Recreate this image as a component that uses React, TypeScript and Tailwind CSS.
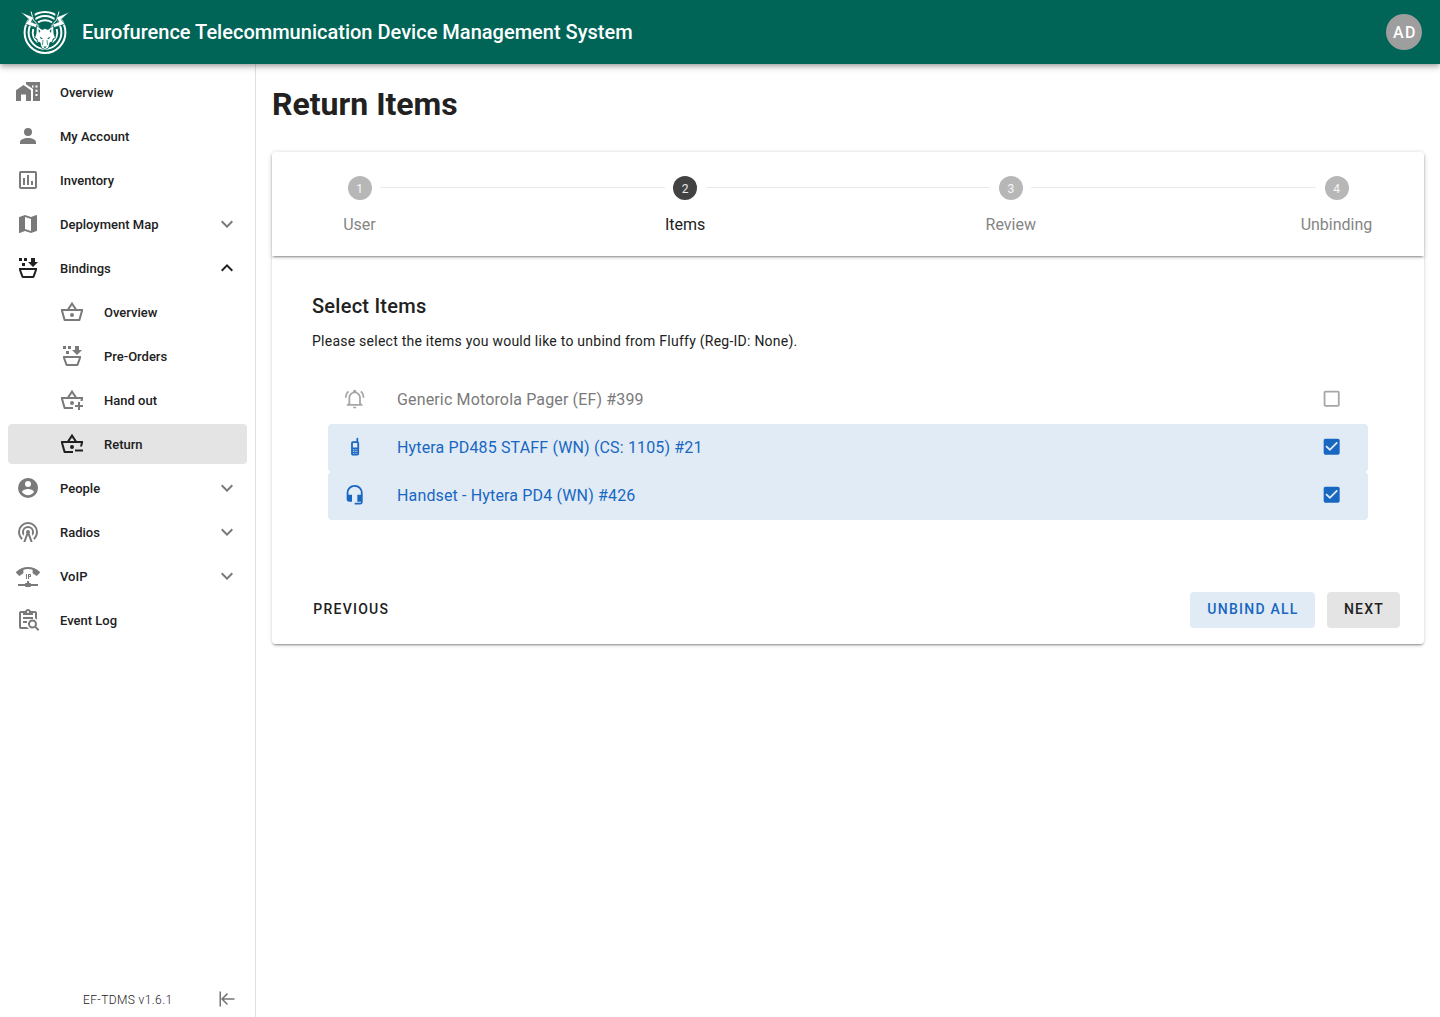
import React from "react";

const icons = {
  account:
    "M12,4A4,4 0 0,1 16,8A4,4 0 0,1 12,12A4,4 0 0,1 8,8A4,4 0 0,1 12,4M12,14C16.42,14 20,15.79 20,18V20H4V18C4,15.79 7.58,14 12,14Z",
  homeCity:
    "M7.5 5L0 10.2V21H5V14.5H10V21H15V10.2L7.5 5M10 2V4.2L17 9V21H24V2H10M16 5.500H17.500V7.500H16V5.500M19.500 5.500H21.500V7.500H19.500V5.500M19.500 9.800H21.500V11.800H19.500V9.800M19.500 14H21.500V16H19.500V14Z",
  chart:
    "M9 17H7V10H9V17M13 17H11V7H13V17M17 17H15V13H17V17M19 19H5V5H19V19.1M19 3H5C3.9 3 3 3.9 3 5V19C3 20.1 3.9 21 5 21H19C20.1 21 21 20.1 21 19V5C21 3.9 20.1 3 19 3Z",
  map: "M15,19L9,16.89V5L15,7.11M20.5,3C20.44,3 20.39,3 20.34,3L15,5.1L9,3L3.36,4.9C3.15,4.97 3,5.15 3,5.38V20.5A0.5,0.5 0 0,0 3.5,21C3.55,21 3.61,21 3.66,20.97L9,18.9L15,21L20.64,19.1C20.85,19 21,18.85 21,18.62V3.5A0.5,0.5 0 0,0 20.5,3Z",
  down: "M7.41,8.58L12,13.17L16.59,8.58L18,10L12,16L6,10L7.41,8.58Z",
  up: "M7.41,15.41L12,10.83L16.59,15.41L18,14L12,8L6,14L7.41,15.41Z",
  basketFill:
    "M3 2H6V5H3V2M6 7H9V10H6V7M8 2H11V5H8V2M17 11L12 6H15V2H19V6H22L17 11M3 12H21V14L18.5 21C18.3 21.6 17.8 22 17 22H7C6.2 22 5.7 21.6 5.5 21L3 14V12M5.1 14L7.3 20H16.7L18.9 14H5.1Z",
  basket:
    "M1 9H7.2L12 1.8L16.8 9H23V11L20.3 20.6L19.8 21H4.2L3.7 20.6L1 11V9M9.6 9H14.4L12 5.4L9.6 9M3.1 11L5.4 19H18.6L20.9 11H3.1M12 13A2 2 0 0 1 12 17A2 2 0 0 1 12 13Z",
  basketPlus:
    "M1 9H7.2L12 1.8L16.8 9H23V11L22.5 13H20.4L20.9 11H3.1L5.4 19H13V21H4.2L3.7 20.6L1 11V9M9.6 9H14.4L12 5.4L9.6 9M12 13A2 2 0 0 1 12 17A2 2 0 0 1 12 13M18 14H20V17H23V19H20V22H18V19H15V17H18V14Z",
  basketMinus:
    "M1 9H7.2L12 1.8L16.8 9H23V11L22 14.5H20L20.9 11H3.1L5.4 19H13V21H4.2L3.7 20.6L1 11V9M9.6 9H14.4L12 5.4L9.6 9M12 13A2 2 0 0 1 12 17A2 2 0 0 1 12 13M15 17.500H23V19.500H15V17.500Z",
  people:
    "M12,19.2C9.5,19.2 7.29,17.92 6,16C6.03,14 10,12.9 12,12.9C14,12.9 17.97,14 18,16C16.71,17.92 14.5,19.2 12,19.2M12,5A3,3 0 0,1 15,8A3,3 0 0,1 12,11A3,3 0 0,1 9,8A3,3 0 0,1 12,5M12,2A10,10 0 0,0 2,12A10,10 0 0,0 12,22A10,10 0 0,0 22,12C22,6.47 17.5,2 12,2Z",
  radio:
    "M12,10A2,2 0 0,1 14,12C14,12.5 13.82,12.94 13.53,13.29L16.7,22H14.57L12,14.93L9.43,22H7.3L10.47,13.29C10.18,12.94 10,12.5 10,12A2,2 0 0,1 12,10M12,8A4,4 0 0,0 8,12C8,12.5 8.1,13 8.28,13.46L7.4,15.86C6.53,14.81 6,13.47 6,12A6,6 0 0,1 12,6A6,6 0 0,1 18,12C18,13.47 17.47,14.81 16.6,15.86L15.72,13.46C15.9,13 16,12.5 16,12A4,4 0 0,0 12,8M12,4A8,8 0 0,0 4,12C4,14.36 5,16.5 6.64,17.94L5.92,19.94C3.54,18.11 2,15.23 2,12A10,10 0 0,1 12,2A10,10 0 0,1 22,12C22,15.23 20.46,18.11 18.08,19.94L17.36,17.94C19,16.5 20,14.36 20,12A8,8 0 0,0 12,4Z",
  voip: "M13,17V19H14A1,1 0 0,1 15,20H22V22H15A1,1 0 0,1 14,23H10A1,1 0 0,1 9,22H2V20H9A1,1 0 0,1 10,19H11V17H13M23.7,7.67C20.66,4.78 16.54,3 12,3S3.34,4.78 .29,7.67C.11,7.85 0,8.1 0,8.38C0,8.66 .11,8.91 .29,9.09L2.77,11.57C2.95,11.75 3.2,11.86 3.5,11.86C3.75,11.86 4,11.75 4.18,11.58C4.97,10.84 5.87,10.22 6.84,9.73C7.17,9.57 7.4,9.23 7.4,8.83V5.73C8.85,5.25 10.39,5 12,5C13.6,5 15.15,5.25 16.6,5.72V8.82C16.6,9.21 16.83,9.56 17.16,9.72C18.13,10.21 19,10.84 19.82,11.57C20,11.75 20.25,11.85 20.5,11.85C20.8,11.85 21.05,11.74 21.23,11.56L23.71,9.08C23.89,8.9 24,8.65 24,8.37C24,8.09 23.88,7.85 23.7,7.67M10 10H11V15H10V10M12 10H14.2C14.8 10 15 10.3 15 10.8V12.2C15 12.8 14.7 13 14.2 13H13V15H12V10M13 11V12H14V11H13Z",
  log: "M11 19H5V5H7V7H17V5H19V10.2C19.8 10.6 20.4 11.1 21 11.8V5C21 3.9 20.1 3 19 3H14.82C14.4 1.84 13.3 1 12 1S9.6 1.84 9.18 3H5C3.9 3 3 3.9 3 5V19C3 20.1 3.9 21 5 21H13C12.1 20.5 11.5 19.8 11 19M12 3C12.55 3 13 3.45 13 4S12.55 5 12 5 11 4.55 11 4 11.45 3 12 3M7 9H17V11H7V9M7 13H11V15H7V13M16.5 11.5C14 11.5 12 13.5 12 16S14 20.5 16.5 20.5C17.4 20.5 18.2 20.3 18.9 19.8L22 22.9L23.4 21.5L20.3 18.4C20.8 17.7 21 16.9 21 16C21 13.5 19 11.5 16.5 11.5M16.5 13.5A2.5 2.5 0 0 1 16.5 18.5A2.5 2.5 0 0 1 16.5 13.5Z",
  collapse:
    "M11.92,19.92L4,12L11.92,4.08L13.33,5.5L7.83,11H22V13H7.83L13.34,18.5L11.92,19.92M4,12V2H2V22H4V12Z",
  bell: "M10,21H14A2,2 0 0,1 12,23A2,2 0 0,1 10,21M21,19V20H3V19L5,17V11C5,7.9 7.03,5.17 10,4.29C10,4.19 10,4.1 10,4A2,2 0 0,1 12,2A2,2 0 0,1 14,4C14,4.1 14,4.19 14,4.29C16.97,5.17 19,7.9 19,11V17L21,19M17,11A5,5 0 0,0 12,6A5,5 0 0,0 7,11V18H17V11M19.75,3.19L18.33,4.61C20.04,6.3 21,8.6 21,11H23C23,8.07 21.84,5.25 19.75,3.19M1,11H3C3,8.6 3.96,6.3 5.67,4.61L4.25,3.19C2.16,5.25 1,8.07 1,11Z",
  phone:
    "M15,2A1,1 0 0,0 14,3V6H10C8.89,6 8,6.89 8,8V20C8,21.1 8.9,22 10,22H15A2,2 0 0,0 17,20V8C17,7.26 16.6,6.62 16,6.28V3A1,1 0 0,0 15,2M10,8H15V13H10V8M10,15H11V16H10V15M12,15H13V16H12V15M14,15H15V16H14V15M10,17H11V18H10V17M12,17H13V18H12V17M14,17H15V18H14V17M10,19H11V20H10V19M12,19H13V20H12V19M14,19H15V20H14V19Z",
  headset:
    "M12,1C7,1 3,5 3,10V17A3,3 0 0,0 6,20H9V12H5V10A7,7 0 0,1 12,3A7,7 0 0,1 19,10V12H15V20H19V21H12V23H18A3,3 0 0,0 21,20V10C21,5 16.97,1 12,1Z",
  checked:
    "M10,17L5,12L6.41,10.58L10,14.17L17.59,6.58L19,8M19,3H5C3.89,3 3,3.89 3,5V19A2,2 0 0,0 5,21H19A2,2 0 0,0 21,19V5C21,3.89 20.1,3 19,3Z",
  blank:
    "M19,3H5C3.89,3 3,3.89 3,5V19A2,2 0 0,0 5,21H19A2,2 0 0,0 21,19V5C21,3.89 20.1,3 19,3M19,5V19H5V5H19Z",
};

type IconName = keyof typeof icons;

function Icon({ name, className = "size-6" }: { name: IconName; className?: string }) {
  return (
    <svg viewBox="0 0 24 24" fill="currentColor" fillRule="evenodd" className={`shrink-0 ${className}`}>
      <path d={icons[name]} />
    </svg>
  );
}

function Logo() {
  return (
    <svg viewBox="0 0 48 48" className="size-12 shrink-0" fill="none">
      <circle cx="24" cy="24.5" r="20.4" stroke="#fff" strokeWidth="2" />
      <circle cx="24" cy="24.5" r="16.4" stroke="#fff" strokeWidth="2" />
      <path d="M16.500 14.800a12.200 12.200 0 0 1 15 0M12.300 21a12.200 12.200 0 0 0 4.500 13.300M35.700 21a12.200 12.200 0 0 1-4.500 13.300" stroke="#fff" strokeWidth="2" />
      <path d="M11 2 13 13 19 19M37 2 35 13 29 19" stroke="#006457" strokeWidth="3.600" />
      <path d="M10 3.500 12.500 12 18 18M38 3.500 35.500 12 30 18" stroke="#fff" strokeWidth="1" />
      <path
        d="M-0.500 4 13 9.500 10 14 17 16.500 19.500 21 4 16 8 11.500ZM48.500 4 35 9.500 38 14 31 16.500 28.500 21 44 16 40 11.500Z"
        fill="#fff"
        stroke="#006457"
        strokeWidth="0.600"
      />
      <path
        d="M15.500 17.500 21 21.500 24 20.500 27 21.500 32.500 17.500 33 26 34.500 30 32 31 31.500 34 29 34.500 27.500 40 24 41.500 20.500 40 19 34.500 16.500 34 16 31 13.500 30 15 26Z"
        fill="#fff"
        stroke="#006457"
        strokeWidth="0.800"
      />
      <path d="M17.500 21 19.500 23 18 25ZM30.500 21 28.500 23 30 25ZM18.500 28.500 22 30.500 20 31ZM29.500 28.500 26 30.500 28 31ZM22.300 38.500H25.700L24 40.300Z" fill="#006457" />
      <path d="M22 32 21.500 37M26 32 26.500 37" stroke="#006457" strokeWidth="0.700" />
    </svg>
  );
}

interface NavEntry {
  icon: IconName;
  label: string;
  chevron?: "up" | "down";
  child?: boolean;
  active?: boolean;
}

const nav: NavEntry[] = [
  { icon: "homeCity", label: "Overview" },
  { icon: "account", label: "My Account" },
  { icon: "chart", label: "Inventory" },
  { icon: "map", label: "Deployment Map", chevron: "down" },
  { icon: "basketFill", label: "Bindings", chevron: "up" },
  { icon: "basket", label: "Overview", child: true },
  { icon: "basketFill", label: "Pre-Orders", child: true },
  { icon: "basketPlus", label: "Hand out", child: true },
  { icon: "basketMinus", label: "Return", child: true, active: true },
  { icon: "people", label: "People", chevron: "down" },
  { icon: "radio", label: "Radios", chevron: "down" },
  { icon: "voip", label: "VoIP", chevron: "down" },
  { icon: "log", label: "Event Log" },
];

function NavItem({ icon, label, chevron, child, active }: NavEntry) {
  const dark = active || chevron === "up";
  return (
    <a
      className={`flex h-10 items-center rounded pr-2 ${child ? "pl-[52px]" : "pl-2"} ${active ? "bg-[#e4e4e4]" : ""} ${dark ? "text-[#212121]" : "text-[#7a7a7a]"}`}
    >
      <Icon name={icon} />
      <span className="ml-5 flex-1 pt-0.5 text-[13px] leading-4 font-medium text-[#212121]">{label}</span>
      {chevron && <Icon name={chevron} />}
    </a>
  );
}

const steps = ["User", "Items", "Review", "Unbinding"];

const items: { icon: IconName; label: string; selected: boolean }[] = [
  { icon: "bell", label: "Generic Motorola Pager (EF) #399", selected: false },
  { icon: "phone", label: "Hytera PD485 STAFF (WN) (CS: 1105) #21", selected: true },
  { icon: "headset", label: "Handset - Hytera PD4 (WN) #426", selected: true },
];

function Stepper() {
  return (
    <div className="h-[104px] rounded-t pt-6 shadow-[0_3px_1px_-2px_rgba(0,0,0,.2),0_2px_2px_rgba(0,0,0,.14),0_1px_5px_rgba(0,0,0,.12)]">
      <div className="flex items-center px-[75.5px]">
        {steps.map((s, i) => (
          <React.Fragment key={s}>
            {i > 0 && <div className="mx-[8.5px] -mt-px h-px flex-1 bg-[#e9e9e9]" />}
            <div
              className={`flex size-6 items-center justify-center rounded-full pt-0.5 text-xs text-white/90 ${i === 1 ? "bg-[#424242]" : "bg-[#b7b7b7]"}`}
            >
              {i + 1}
            </div>
          </React.Fragment>
        ))}
      </div>
      <div className="mt-[13px] flex justify-between">
        {steps.map((s, i) => (
          <div key={s} className={`w-[175px] text-center text-base ${i === 1 ? "text-[#212121]" : "text-[#858585]"}`}>
            {s}
          </div>
        ))}
      </div>
    </div>
  );
}

export default function App() {
  return (
    <div className="flex h-[1017px] flex-col bg-white font-['Roboto',sans-serif] text-[#212121]">
      <header className="z-10 flex h-16 shrink-0 items-center bg-[#006457] pr-[18px] pl-[21px] shadow-[0_2px_4px_-1px_rgba(0,0,0,.2),0_4px_5px_rgba(0,0,0,.14),0_1px_10px_rgba(0,0,0,.12)]">
        <Logo />
        <h1 className="ml-[13px] flex-1 text-xl font-medium tracking-[0.01px] text-white">
          Eurofurence Telecommunication Device Management System
        </h1>
        <div className="flex size-9 items-center justify-center rounded-full bg-[#9e9e9e] pt-0.5 pl-0.5 text-base font-medium tracking-[1.4px] text-white">
          AD
        </div>
      </header>
      <div className="flex min-h-0 flex-1">
        <aside className="flex w-64 shrink-0 flex-col border-r border-[#e0e0e0]">
          <nav className="flex flex-1 flex-col gap-1 p-2">
            {nav.map((n, i) => (
              <NavItem key={i} {...n} />
            ))}
          </nav>
          <div className="flex h-9 items-center justify-end pr-[19px] text-[#757575]">
            <span className="mr-[45.5px] pt-0.5 text-xs font-light tracking-[0.4px] text-[#212121]">EF-TDMS v1.6.1</span>
            <Icon name="collapse" className="size-[18px]" />
          </div>
        </aside>
        <main className="flex-1 px-4">
          <h2 className="mt-4 text-[32px] leading-[48px] font-bold">Return Items</h2>
          <section className="mt-6 h-[492px] rounded shadow-[0_3px_1px_-2px_rgba(0,0,0,.2),0_2px_2px_rgba(0,0,0,.14),0_1px_5px_rgba(0,0,0,.12)]">
            <Stepper />
            <div className="px-10 pt-[34px]">
              <h3 className="text-xl leading-8 font-medium tracking-[0.25px]">Select Items</h3>
              <p className="mt-[9px] text-sm tracking-[0.245px]">
                Please select the items you would like to unbind from Fluffy (Reg-ID: None).
              </p>
              <div className="mt-[25px] px-4">
                {items.map((it) => (
                  <div
                    key={it.label}
                    className={`flex h-12 items-center rounded px-4 ${it.selected ? "bg-[#e1ebf6] text-[#1867c0]" : "text-[#a6a6a6]"}`}
                  >
                    <Icon name={it.icon} className="mb-[2.3px] size-[21.33px]" />
                    <span className={`ml-[31.67px] flex-1 text-base tracking-[0.15px] ${it.selected ? "" : "text-[#7a7a7a]"}`}>{it.label}</span>
                    <Icon name={it.selected ? "checked" : "blank"} className="mr-[9.4px] mb-[2.3px] size-[21.33px]" />
                  </div>
                ))}
              </div>
            </div>
            <div className="mt-[72px] flex h-9 items-center gap-3 px-6 text-sm font-medium">
              <button className="h-9 rounded pb-0.5 pl-[17.3px] tracking-[1.25px]">PREVIOUS</button>
              <div className="flex-1" />
              <button className="h-9 w-[125px] rounded bg-[#e1ebf6] pb-0.5 pl-px tracking-[1.25px] text-[#1867c0]">UNBIND ALL</button>
              <button className="h-9 w-[73px] rounded bg-[#e4e4e4] pb-0.5 pl-px tracking-[1.25px]">NEXT</button>
            </div>
          </section>
        </main>
      </div>
    </div>
  );
}
